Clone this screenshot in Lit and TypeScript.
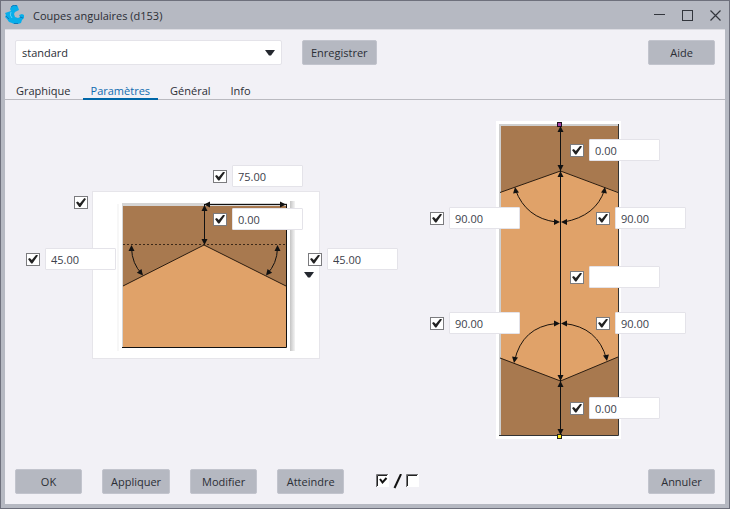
import { LitElement, html, svg, css, nothing } from "lit";
import { customElement, state } from "lit/decorators.js";
import { classMap } from "lit/directives/class-map.js";

interface Field {
  name: string;
  x: number;
  y: number;
  value: string;
}

/* Positions are relative to the drawing that holds the field. */
const FRONT: Field[] = [
  { name: "Largeur", x: 187, y: 0, value: "75.00" },
  { name: "Retrait", x: 187, y: 43, value: "0.00" },
  { name: "Angle gauche", x: 0, y: 83, value: "45.00" },
  { name: "Angle droit", x: 282, y: 83, value: "45.00" },
];

const SIDE: Field[] = [
  { name: "Retrait haut", x: 140, y: 18, value: "0.00" },
  { name: "Angle haut gauche", x: 0, y: 86, value: "90.00" },
  { name: "Angle haut droit", x: 166, y: 86, value: "90.00" },
  { name: "Longueur", x: 140, y: 145, value: "" },
  { name: "Angle bas gauche", x: 0, y: 191, value: "90.00" },
  { name: "Angle bas droit", x: 166, y: 191, value: "90.00" },
  { name: "Retrait bas", x: 140, y: 276, value: "0.00" },
];

const TABS = ["Graphique", "Paramètres", "Général", "Info"];

/* Arrow head whose tip is at x, y; angle 0 points right. */
const head = (x: number, y: number, angle: number) =>
  svg`<path d="M0 0L-6 -3V3Z" transform="translate(${x} ${y}) rotate(${angle})" fill="#111"/>`;

@customElement("app-root")
export class AppRoot extends LitElement {
  @state() private tab = "Paramètres";

  static styles = css`
    :host {
      display: block;
      font: 11px/16px "Open Sans", "Noto Sans", sans-serif;
      color: #2b2e35;
    }
    * { box-sizing: border-box; }
    button, input, select { font: inherit; color: inherit; margin: 0; }
    svg { display: block; }
    .window {
      min-height: 100vh;
      display: flex;
      flex-direction: column;
      border: 1px solid #6e707c;
      background: #b6b9c2;
      padding: 0 4px 4px;
    }
    .titlebar {
      height: 28px;
      flex: none;
      display: flex;
      align-items: center;
      gap: 8px;
    }
    .title { flex: 1; font: inherit; margin: 0; padding-top: 2px; }
    .winbuttons { display: flex; gap: 8px; }
    .winbutton {
      width: 20px;
      height: 24px;
      padding: 0;
      border: 0;
      background: none;
      display: grid;
      place-items: center;
    }
    .content {
      flex: 1;
      display: flex;
      flex-direction: column;
      background: #f2f1f6;
      border-top: 1px solid #dcdce2;
    }
    .toolbar, .footer { display: flex; align-items: center; gap: 20px; padding: 10px; }
    .push { margin-left: auto; }
    .btn {
      height: 25px;
      min-width: 67px;
      padding: 0 8px;
      border: 1px solid #c2c4cd;
      border-radius: 2px;
      background: #b5b8c1;
    }
    .combo { display: grid; align-items: center; flex: 0 1 267px; }
    .combo > * { grid-area: 1 / 1; }
    .combo select {
      appearance: none;
      height: 25px;
      border: 1px solid #e4e3e9;
      border-radius: 2px;
      background: #fff;
      padding: 0 24px 0 6px;
    }
    .combo svg { justify-self: end; margin-right: 7px; pointer-events: none; }
    .tabs { display: flex; gap: 4px; padding: 8px 3px 0; border-bottom: 1px solid #babac0; }
    .tab {
      border: 0;
      background: none;
      padding: 0 8px;
      height: 17px;
      margin-bottom: -1px;
      border-bottom: 2px solid transparent;
      line-height: 15px;
    }
    .tab.active { color: #0e6bb0; border-color: #0067a8; }
    .canvas {
      flex: 1;
      display: flex;
      justify-content: space-between;
      align-items: flex-start;
      padding: 21px 39px 0 21px;
    }
    .drawing { position: relative; flex: none; }
    .front { margin-top: 44px; }
    .field { position: absolute; display: flex; align-items: center; gap: 5px; }
    .check {
      appearance: none;
      width: 14px;
      height: 13px;
      border: 1px solid #7b7b7e;
      background: #fff;
      display: grid;
      place-items: center;
    }
    .check:checked::before {
      content: "";
      width: 10px;
      height: 9px;
      background: #222;
      clip-path: polygon(0 50%, 18% 38%, 38% 62%, 84% 0, 100% 12%, 44% 100%, 32% 100%);
    }
    .value {
      width: 71px;
      height: 22px;
      border: 1px solid #e4e3e9;
      border-radius: 1px;
      background: #fff;
      padding: 0 5px;
      color: #3c414b;
    }
    .lone { left: 48px; top: 31px; }
    .more {
      position: absolute;
      left: 276px;
      top: 105px;
      padding: 2px;
      border: 0;
      background: none;
    }
    .toggle { border: 0; background: none; padding: 0; margin-left: 12px; }
  `;

  private field(f: Field) {
    return html`<div class="field" style="left:${f.x}px;top:${f.y}px">
      <input class="check" type="checkbox" checked aria-label="Activer ${f.name}" />
      <input class="value" type="text" .value=${f.value} aria-label=${f.name} />
    </div>`;
  }

  private arrow() {
    return html`<svg width="10" height="6" viewBox="0 0 10 6" aria-hidden="true"><path d="M0 0H10L6 5.5H4Z" fill="#24282f"/></svg>`;
  }

  private logo() {
    return html`<svg width="20" height="20" viewBox="0 0 20 20" aria-hidden="true">
      <path d="M6 2L8 0H12L13 2L14 5L12 6L10 7L9 9L10 12L13 13L15 12L14 10L17 9L19 10V13L17 15L16 18L13 19H9L7 18L4 17L2 14L0 12L1 10L0 8L3 7L6 6L5 4Z" fill="#08aeea"/>
      <path d="M6 2L9 0L12 1M1 11L4 14M9 18.5H13M15 12L18 13" fill="none" stroke="#1476b6" stroke-width="1"/>
      <path d="M6 7Q4 10 7 13" fill="none" stroke="#5ad3fa" stroke-width="1"/>
    </svg>`;
  }

  private frontView() {
    return html`<svg width="372" height="195" viewBox="26 165 372 195" role="img" aria-label="Vue de face">
      <defs><linearGradient id="shade"><stop stop-color="#c4c4c4"/><stop offset="1" stop-color="#f4f4f4"/></linearGradient></defs>
      <rect x="92.5" y="191.5" width="227" height="167" fill="#fff" stroke="#e6e5ea"/>
      <rect x="117" y="204" width="2" height="147" fill="#f7f7f7"/>
      <rect x="290" y="201" width="5" height="150" fill="url(#shade)"/>
      <path d="M122 203H287V206H124V347H122Z" fill="#d5d5d5"/>
      <rect x="123" y="206" width="163" height="141" fill="#a8794f"/>
      <path d="M123 286L204 245L286 286V347H123Z" fill="#e0a269"/>
      <path d="M123 286L204 245L286 286" fill="none" stroke="#2b1d11"/>
      <path d="M123 244.5H286" stroke="#3d2918" stroke-dasharray="2 2"/>
      <path d="M122 347.5H286.5V204" fill="none" stroke="#111"/>
      <path d="M204 204.5H286M204.5 205V244" stroke="#111"/>
      <path d="M131.5 248Q132 264 142 274M277.5 248Q277 264 267 274" fill="none" stroke="#111"/>
      ${head(204, 204.5, 180)}${head(286, 204.5, 0)}
      ${head(204.5, 205, -90)}${head(204.5, 245, 90)}
      ${head(131.5, 245, -90)}${head(143, 275.5, 50)}
      ${head(277.5, 245, -90)}${head(266, 275.5, 130)}
    </svg>`;
  }

  private sideView() {
    return html`<svg width="256" height="318" viewBox="430 121 256 318" role="img" aria-label="Vue de côté">
      <rect x="496" y="121" width="125" height="318" fill="#fff"/>
      <path d="M499 124H618V126H501V436H499Z" fill="#cfcfcf"/>
      <rect x="501" y="126" width="117" height="310" fill="#a8794f"/>
      <path d="M501 192L560.5 171L618 192V357L560.5 381L501 358Z" fill="#e0a269"/>
      <path d="M500 192.5L560.5 171L618 192.5M500 358L560.5 381L618 357" fill="none" stroke="#2b1d11"/>
      <path d="M499 435.5H618.5V124" fill="none" stroke="#333"/>
      <path d="M560.5 126V435" stroke="#111"/>
      <path d="M515.5 190Q526 218 556 222M604.5 190Q596 216 564 222M514.5 361Q522 327 556 323.5M606.5 359Q598 327 564 323.5" fill="none" stroke="#1d140c"/>
      ${head(560.5, 126, -90)}${head(560.5, 171, 90)}
      ${head(560.5, 171, -90)}${head(560.5, 381, 90)}
      ${head(560.5, 381, -90)}${head(560.5, 435, 90)}
      ${head(515, 187, -100)}${head(560, 222, 0)}
      ${head(605, 187, -80)}${head(561, 222, 180)}
      ${head(514, 363, 100)}${head(560, 323.5, 0)}
      ${head(607, 361, 80)}${head(561, 323.5, 180)}
      <rect x="557.5" y="122.5" width="4" height="4" fill="#a43fa8" stroke="#1c101c"/>
      <rect x="557.5" y="434.5" width="4" height="4" fill="#ffec1a" stroke="#222"/>
    </svg>`;
  }

  render() {
    return html`<div class="window">
      <header class="titlebar">
        ${this.logo()}
        <h1 class="title">Coupes angulaires (d153)</h1>
        <div class="winbuttons">
          <button class="winbutton" aria-label="Réduire"><svg width="11" height="11"><path d="M0 4.5H11" stroke="#33363d"/></svg></button>
          <button class="winbutton" aria-label="Agrandir"><svg width="11" height="11"><rect x=".5" y=".5" width="10" height="10" fill="none" stroke="#33363d"/></svg></button>
          <button class="winbutton" aria-label="Fermer"><svg width="11" height="11"><path d="M.5 .5L10.5 10.5M10.5 .5L.5 10.5" stroke="#33363d" stroke-width="1.2"/></svg></button>
        </div>
      </header>
      <main class="content">
        <div class="toolbar">
          <div class="combo">
            <select aria-label="Modèle"><option>standard</option></select>
            ${this.arrow()}
          </div>
          <button class="btn">Enregistrer</button>
          <button class="btn push">Aide</button>
        </div>
        <nav class="tabs" role="tablist">
          ${TABS.map((t) => html`<button role="tab" aria-selected=${t === this.tab}
            class=${classMap({ tab: true, active: t === this.tab })} @click=${() => (this.tab = t)}>${t}</button>`)}
        </nav>
        ${this.tab === "Paramètres"
          ? html`<section class="canvas">
              <div class="drawing front">
                ${this.frontView()}
                <div class="field lone"><input class="check" type="checkbox" checked aria-label="Vue de face" /></div>
                ${FRONT.map((f) => this.field(f))}
                <button class="more" aria-label="Choisir la référence">${this.arrow()}</button>
              </div>
              <div class="drawing">${this.sideView()}${SIDE.map((f) => this.field(f))}</div>
            </section>`
          : html`<section class="canvas">${nothing}</section>`}
        <footer class="footer">
          <button class="btn">OK</button>
          <button class="btn">Appliquer</button>
          <button class="btn">Modifier</button>
          <button class="btn">Atteindre</button>
          <button class="toggle" aria-label="Tout cocher ou décocher">
            <svg width="43" height="16" viewBox="0 0 43 16">
              <path d="M0 0H13V13H0ZM30 0H43V13H30Z" fill="#fff"/>
              <path d="M.5 13V.5H12M30.5 13V.5H42" fill="none" stroke="#77777a"/>
              <path d="M1.5 12V1.5H11M31.5 12V1.5H41" fill="none" stroke="#222"/>
              <path d="M4 5L6.5 8.5L10.5 4" fill="none" stroke="#111" stroke-width="2"/>
              <path d="M18.5 14L25 0" stroke="#111" stroke-width="2"/>
            </svg>
          </button>
          <button class="btn push">Annuler</button>
        </footer>
      </main>
    </div>`;
  }
}
